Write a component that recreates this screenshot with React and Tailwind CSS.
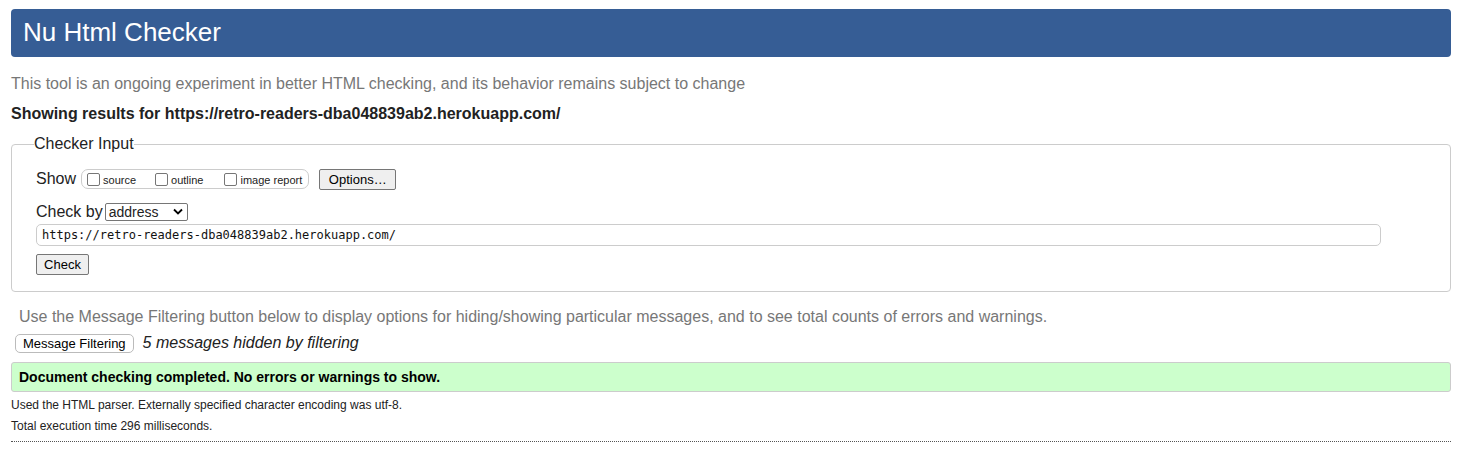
import React from 'react';

const sans = "font-['Liberation_Sans',Arial,sans-serif]";

function Btn({ children, className = '' }) {
  return (
    <button
      type="button"
      className={`bg-[#efefef] border border-[#767676] rounded-[2px] text-[13px] leading-none text-black px-[6px] ${className}`}
    >
      {children}
    </button>
  );
}

function Box({ label, gap = '' }) {
  return (
    <label className={`flex items-center whitespace-nowrap ${gap}`}>
      <span className="w-[13px] h-[13px] border border-[#767676] rounded-[2px] bg-white mr-[3px] shrink-0" />
      <span className="text-[11px] text-[#222] pt-[2px]">{label}</span>
    </label>
  );
}

export default function App() {
  return (
    <div className={`${sans} bg-white w-[1471px] h-[453px] overflow-hidden text-[#222]`}>
      <div className="pt-[9px] pl-[11px] w-[1451px]">
        {/* Header */}
        <h1 className="h-[48px] bg-[#365d95] rounded-[4px] text-white text-[26px] leading-[46px] pl-[12px]">
          Nu Html Checker
        </h1>

        <p className="text-[16px] text-[#777] mt-[18px] leading-[18px]">
          This tool is an ongoing experiment in better HTML checking, and its behavior remains subject to change
        </p>
        <p className="text-[16px] font-bold text-[#222] mt-[12px] leading-[18px]">
          Showing results for https://retro-readers-dba048839ab2.herokuapp.com/
        </p>

        {/* Checker input */}
        <fieldset className="mt-[12px] border border-[#ccc] rounded-[4px] h-[157px] pl-[24px] pr-[10px]">
          <legend className="text-[16px] text-[#222] ml-[-2px] leading-[18px]">Checker Input</legend>

          <div className="flex items-center mt-[15px] h-[22px]">
            <span className="text-[16px] mr-[5px]">Show</span>
            <div className="flex items-center h-[20px] border border-[#ccc] rounded-[7px] pl-[5px] pr-[6px]">
              <Box label="source" gap="mr-[19px]" />
              <Box label="outline" gap="mr-[21px]" />
              <Box label="image report" />
            </div>
            <Btn className="ml-[10px] h-[21px] w-[77px]">Options…</Btn>
          </div>

          <div className="flex items-center mt-[12px] h-[19px]">
            <span className="text-[16px] mr-[2px]">Check by</span>
            <div className="w-[83px] h-[18px] border border-[#767676] rounded-[2px] flex items-center justify-between pl-[3px] pr-[4px]">
              <span className="text-[14px] leading-none">address</span>
              <svg width="10" height="7" viewBox="0 0 10 7" fill="none">
                <path d="M1 1.5 L5 5.5 L9 1.5" stroke="#000" strokeWidth="1.8" />
              </svg>
            </div>
          </div>

          <div className="mt-[3px] w-[1345px] h-[22px] border border-[#ccc] rounded-[5px] flex items-center pl-[5px]">
            <span className="font-['DejaVu_Sans_Mono',monospace] text-[12px] text-[#111]">
              https://retro-readers-dba048839ab2.herokuapp.com/
            </span>
          </div>

          <Btn className="mt-[8px] h-[21px] w-[53px]">Check</Btn>
        </fieldset>

        <p className="text-[16px] text-[#777] mt-[16px] ml-[8px] leading-[18px]">
          Use the Message Filtering button below to display options for hiding/showing particular messages, and to see total counts of errors and warnings.
        </p>

        <div className="flex items-center mt-[7px] ml-[4px] h-[20px]">
          <button
            type="button"
            className="h-[19px] px-[7px] border border-[#bbb] rounded-[5px] bg-white text-[13px] leading-none text-black"
          >
            Message Filtering
          </button>
          <span className="italic text-[16px] text-[#222] ml-[9px]">5 messages hidden by filtering</span>
        </div>

        <div className="mt-[9px] h-[30px] bg-[#ccffcc] border border-[#ccc] rounded-[3px] flex items-center pl-[7px]">
          <span className="font-bold text-[14px] text-black">Document checking completed. No errors or warnings to show.</span>
        </div>

        <p className="text-[12px] text-[#222] mt-[6px] leading-[14px]">
          Used the HTML parser. Externally specified character encoding was utf-8.
        </p>
        <p className="text-[12px] text-[#222] mt-[7px] leading-[14px]">Total execution time 296 milliseconds.</p>

        <div className="mt-[8px] border-t border-dotted border-[#555]" />
      </div>
    </div>
  );
}
